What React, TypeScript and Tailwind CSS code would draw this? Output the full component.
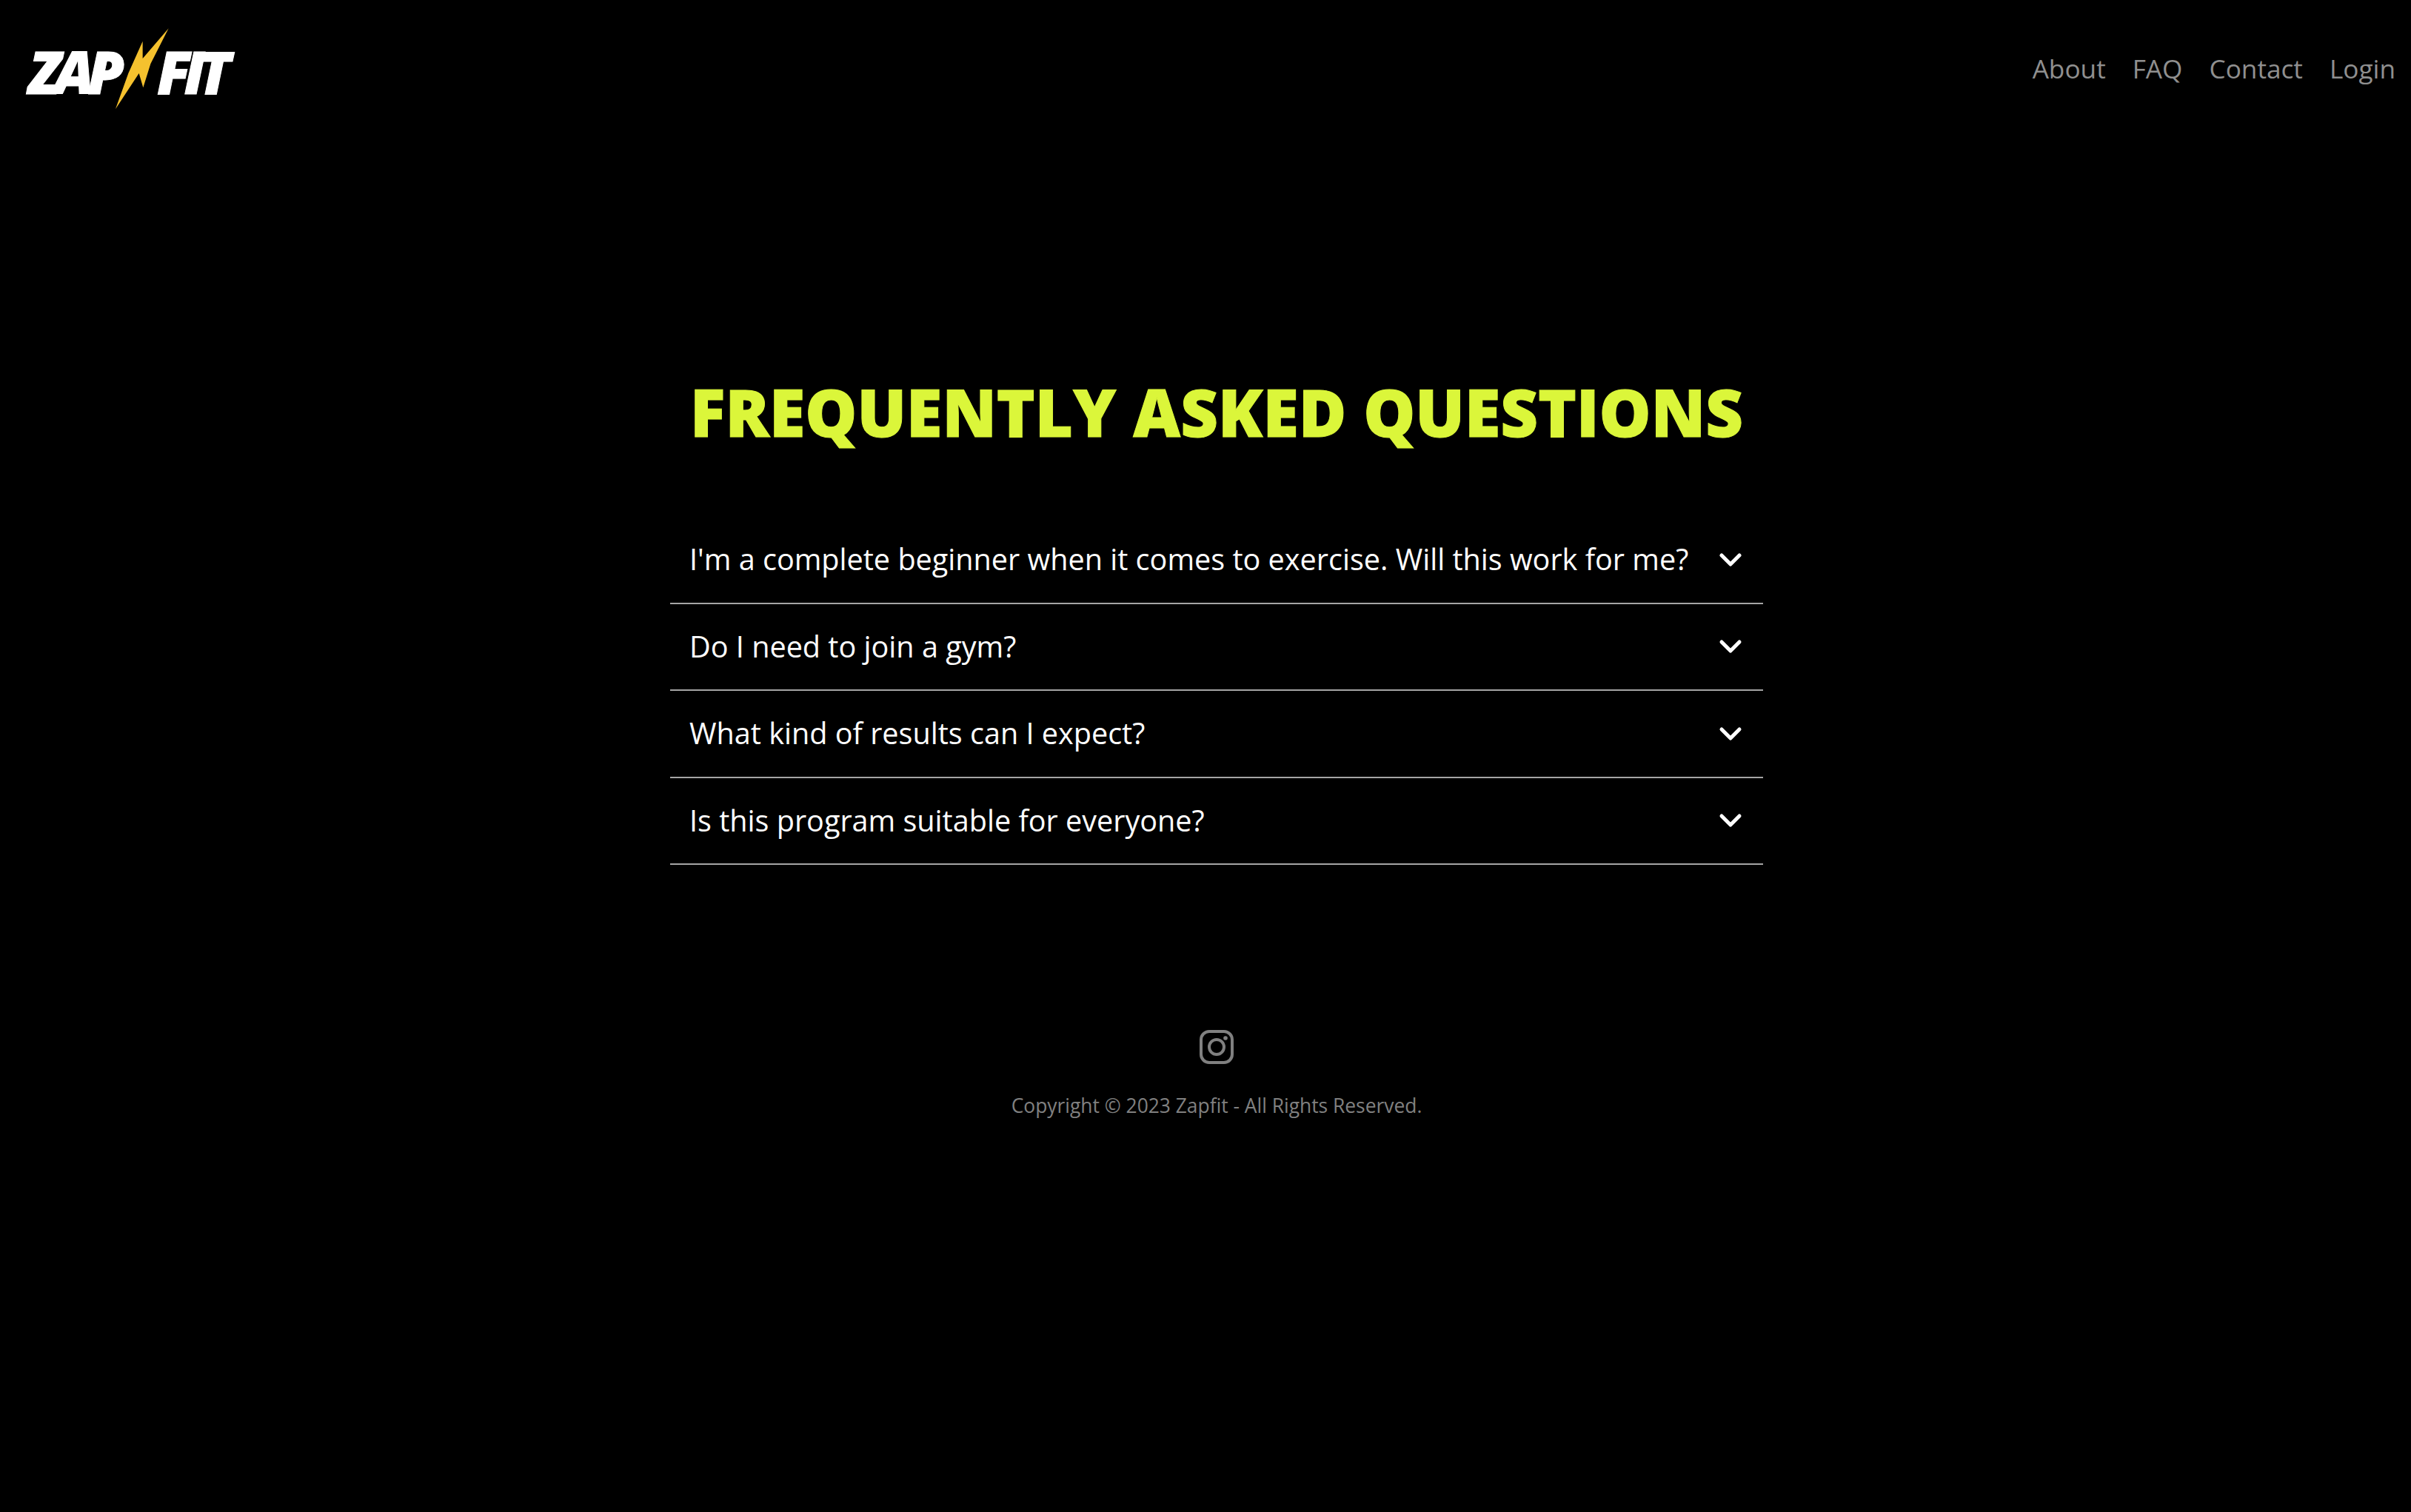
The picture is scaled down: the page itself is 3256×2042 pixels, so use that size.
import { ChevronDown } from "lucide-react";

const faqs = [
  "I'm a complete beginner when it comes to exercise. Will this work for me?",
  "Do I need to join a gym?",
  "What kind of results can I expect?",
  "Is this program suitable for everyone?",
];

function Logo() {
  return (
    <div className="relative h-[186px] w-[360px] shrink-0">
      <span className="absolute left-[39px] top-[42px] text-[80px] leading-[109px] font-extrabold italic tracking-[-9px] text-white [-webkit-text-stroke:1px_white]">ZAP</span>
      <span className="absolute left-[212px] top-[42px] text-[80px] leading-[109px] font-extrabold italic tracking-[-9px] text-white [-webkit-text-stroke:1px_white]">FIT</span>
      <svg className="absolute left-0 top-0" width="360" height="186" viewBox="0 0 1080 558">
        <polygon points="683,118 610,262 580,358 563,300 468,445 520,300 578,170 578,240" fill="#f5c12e" />
      </svg>
    </div>
  );
}

export default function App() {
  return (
    <div className="min-h-[2042px] bg-black font-['Open_Sans','Noto_Sans',sans-serif]">
      <header className="flex h-[186px] items-center justify-between pr-[21px] pb-[2px]">
        <Logo />
        <nav className="flex items-center gap-[36px] text-[35.2px] text-[#8f8f8f]">
          <a>About</a>
          <a>FAQ</a>
          <a>Contact</a>
          <a>Login</a>
        </nav>
      </header>
      <div className="pl-[30px]">
        <main className="mx-auto flex w-[1476px] flex-col items-center pt-[309px]">
          <h1 className="text-[88px] leading-[122px] font-extrabold whitespace-nowrap text-[#dbf63a] [-webkit-text-stroke:1px_#dbf63a]">FREQUENTLY ASKED QUESTIONS</h1>
          <div className="mt-[81px] w-full">
            {faqs.map((q) => (
              <div key={q} className="flex h-[117.5px] items-center justify-between border-b-2 border-[#a5a5a5] pr-[20px] pl-[26px] text-[39.6px] text-white">
                <span>{q}</span>
                <ChevronDown size={48} strokeWidth={2.5} color="white" />
              </div>
            ))}
          </div>
        </main>
        <footer className="mt-[222px] flex flex-col items-center">
          <svg width="48" height="48" viewBox="0 0 48 48" fill="none" stroke="#808080" strokeWidth="4">
            <rect x="3" y="3" width="42" height="42" rx="11" />
            <circle cx="24" cy="24" r="10" />
            <circle cx="36" cy="12" r="2.8" fill="#808080" stroke="none" />
          </svg>
          <p className="mt-[36px] text-[26.4px] leading-[38px] text-[#808080]">Copyright © 2023 Zapfit - All Rights Reserved.</p>
        </footer>
      </div>
    </div>
  );
}
